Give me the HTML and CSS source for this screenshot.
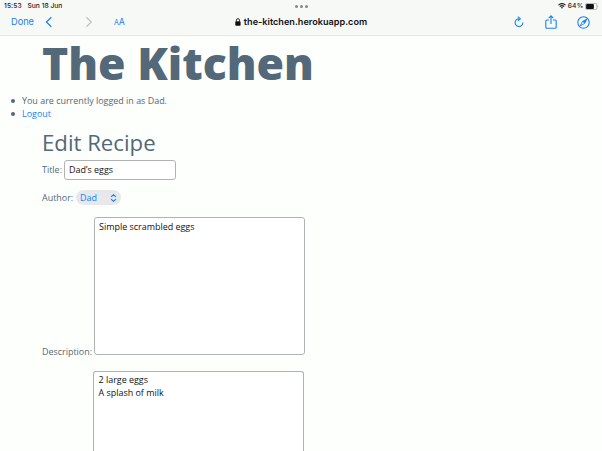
FILE: index.html
```html
<!DOCTYPE html>
<html lang="en">
<head>
<meta charset="utf-8">
<title>The Kitchen</title>
<link rel="stylesheet" href="styles.css">
</head>
<body>
<header class="chrome">
  <div class="status">
    <div class="clock"><span class="time">15:53</span><span class="date">Sun 18 Jun</span></div>
    <div class="dots"><i></i><i></i><i></i></div>
    <div class="power">
      <svg width="8" height="6" viewBox="0 0 8 6" fill="none" stroke="#222"><path d="M.5 2.1Q4-.9 7.5 2.1M1.8 3.6Q4 1.7 6.2 3.6" stroke-width="1.2"/><path d="M2.9 4.5Q4 3.6 5.1 4.5L4 5.8Z" fill="#222" stroke="none"/></svg>
      <span class="percent">64%</span>
      <svg width="14" height="7" viewBox="0 0 14 7"><rect x=".4" y=".4" width="11.6" height="6.2" rx="1.7" fill="none" stroke="#999" stroke-width=".7"/><rect x="1.1" y="1.1" width="7.8" height="4.8" rx="1" fill="#111"/><path d="M12.8 2.4q1 1.1 0 2.2z" fill="#999"/></svg>
    </div>
  </div>
  <nav class="toolbar">
    <div class="left">
      <a class="done">Done</a>
      <svg class="back" width="8" height="12" viewBox="0 0 8 12"><path d="M6.3 1.2 1.4 6l4.9 4.8"/></svg>
      <svg class="forward" width="8" height="12" viewBox="0 0 8 12"><path d="M1.4 1.2 6.3 6l-4.9 4.8"/></svg>
      <a class="textsize"><small>A</small>A</a>
    </div>
    <div class="address">
      <svg width="6" height="8" viewBox="0 0 6 8"><rect x=".3" y="3.3" width="5.3" height="4.4" rx=".8" fill="#111"/><path d="M1.4 3.5V2.2a1.55 1.55 0 0 1 3.1 0v1.3" fill="none" stroke="#111" stroke-width=".9"/></svg>
      <span class="host">the-kitchen.herokuapp.com</span>
    </div>
    <div class="actions">
      <svg width="10" height="12" viewBox="0 0 10 12"><path d="M5 2.7A3.9 3.9 0 1 0 8.9 6.6M3.8.6l2.5 2.1-2.4 2.1"/></svg>
      <svg width="12" height="14" viewBox="0 0 12 14"><path d="M4 5H1.8a1 1 0 0 0-1 1v6.2a1 1 0 0 0 1 1h8.4a1 1 0 0 0 1-1V6a1 1 0 0 0-1-1H8M6 9V1M3.7 3.1 6 .8l2.3 2.3"/></svg>
      <svg width="13" height="13" viewBox="0 0 13 13"><circle cx="6.5" cy="6.5" r="5.7"/><path class="needle" d="M9.9 3.1 7.5 7.5 3.1 9.9 5.5 5.5Z"/><path class="hub" d="M9.9 3.1 7.5 7.5 5.5 5.5Z"/></svg>
    </div>
  </nav>
</header>
<main class="page">
  <h1>The Kitchen</h1>
  <ul class="session">
    <li>You are currently logged in as Dad.</li>
    <li><a>Logout</a></li>
  </ul>
  <h2>Edit Recipe</h2>
  <form>
    <div class="row title-row"><label for="title">Title:</label><input id="title" type="text" value="Dad’s eggs"></div>
    <div class="row author-row"><label>Author:</label><div class="select"><span>Dad</span><svg width="7" height="8" viewBox="0 0 7 8"><path d="M1 2.9 3.5.8 6 2.9M1 5.1l2.5 2.1L6 5.1"/></svg></div></div>
    <div class="row area-row"><label for="desc">Description:</label><textarea id="desc">Simple scrambled eggs</textarea></div>
    <div class="row ingredients-row"><textarea aria-label="Ingredients">2 large eggs
A splash of milk</textarea></div>
  </form>
</main>
</body>
</html>
```
FILE: styles.css
```css
* { box-sizing: border-box; }
html, body { height: 100%; }
body {
  display: flex;
  flex-direction: column;
  margin: 0;
  overflow: hidden;
  background: #fdfffd;
  color: #536878;
  font: 8.95px/13px "Open Sans", sans-serif;
}
.chrome {
  flex: none;
  height: 36px;
  background: #f7f9f7;
  border-bottom: 1px solid #e5e7e6;
  font-family: Inter, sans-serif;
}
.status {
  display: grid;
  grid-template-columns: 1fr auto 1fr;
  align-items: center;
  height: 11px;
  padding: 0 3px 0 4px;
  color: #222;
  font-size: 6.7px;
  line-height: 11px;
  font-weight: 500;
}
.clock { display: flex; gap: 5.5px; padding-top: 1px; }
.time { width: 18px; letter-spacing: .1px; }
.dots { display: flex; gap: 2px; }
.dots i { width: 3px; height: 3px; border-radius: 50%; background: #858786; }
.power { display: flex; justify-content: flex-end; align-items: center; gap: 1.5px; }
.percent { letter-spacing: .2px; }
.toolbar {
  display: grid;
  grid-template-columns: 1fr auto 1fr;
  align-items: center;
  height: 22px;
  padding: 0 12px 0 11px;
}
.left { display: flex; align-items: center; color: #1682ee; }
.done { width: 34px; padding-bottom: 1px; font-size: 9.2px; }
.toolbar svg { display: block; }
.back, .forward { fill: none; stroke-width: 1.2; }
.back { stroke: #1682ee; }
.forward { margin-left: 32px; stroke: #bfc1c1; }
.textsize { margin-left: 21px; font-size: 8.8px; }
.textsize small { font-size: 7px; }
.address { display: flex; align-items: center; gap: 3px; padding: 0 0 1px 1px; color: #111; }
.host { font-size: 9.15px; font-weight: 600; }
.actions { display: flex; align-items: center; justify-content: flex-end; gap: 20.5px; }
.actions svg { fill: none; stroke: #1682ee; stroke-width: 1.1; }
.actions .needle { stroke-width: .9; }
.actions .hub { fill: #1682ee; stroke: none; }
.page {
  flex: 1;
  display: flex;
  flex-direction: column;
  min-height: 0;
  padding: 0 42px;
}
h1 {
  flex: none;
  margin: 0;
  height: 54px;
  font-size: 44.5px;
  line-height: 54px;
  font-weight: 800;
  white-space: nowrap;
}
.session { flex: none; margin: 4px 0 0 -31px; padding: 0; list-style: none; }
.session li { display: flex; align-items: center; gap: 7px; }
.session li::before {
  content: "";
  width: 4px;
  height: 4px;
  border-radius: 50%;
  background: #536878;
}
.session a { color: #1682ee; }
h2 {
  flex: none;
  margin: 7px 0 0;
  height: 31px;
  font-size: 22.2px;
  line-height: 31px;
  font-weight: 400;
}
form { flex: 1; display: flex; flex-direction: column; min-height: 0; }
.row { display: flex; flex: none; }
input, textarea {
  display: block;
  margin: 0;
  border: 1px solid #b0b2b4;
  border-radius: 3px;
  background: #fff;
  color: #111;
  font: 8.95px/13px "Open Sans", sans-serif;
  outline: 0;
  resize: none;
}
.title-row { align-items: center; height: 20px; margin-top: 2px; }
.title-row label { width: 22px; padding-bottom: 2px; }
input { width: 112px; height: 20px; padding: 0 4px 1px; }
.author-row { align-items: center; height: 15px; margin-top: 10px; }
.author-row label { width: 34px; }
.select {
  display: flex;
  align-items: center;
  justify-content: space-between;
  width: 45px;
  height: 15px;
  padding: 0 4px;
  border-radius: 8px;
  background: #e8e8ec;
  color: #1682ee;
}
.select svg { fill: none; stroke: #1682ee; stroke-width: 1.1; }
.area-row { align-items: flex-end; margin-top: 12px; }
.area-row label { width: 52px; margin-bottom: -3px; }
textarea { width: 211px; height: 138px; padding: 2px 4px; overflow: hidden; }
.row.ingredients-row { flex: 1; min-height: 0; margin: 16px 0 0 51px; }
.ingredients-row textarea {
  height: 100%;
  padding: 1px 4.5px;
  border-bottom: 0;
  border-radius: 3px 3px 0 0;
}
```
